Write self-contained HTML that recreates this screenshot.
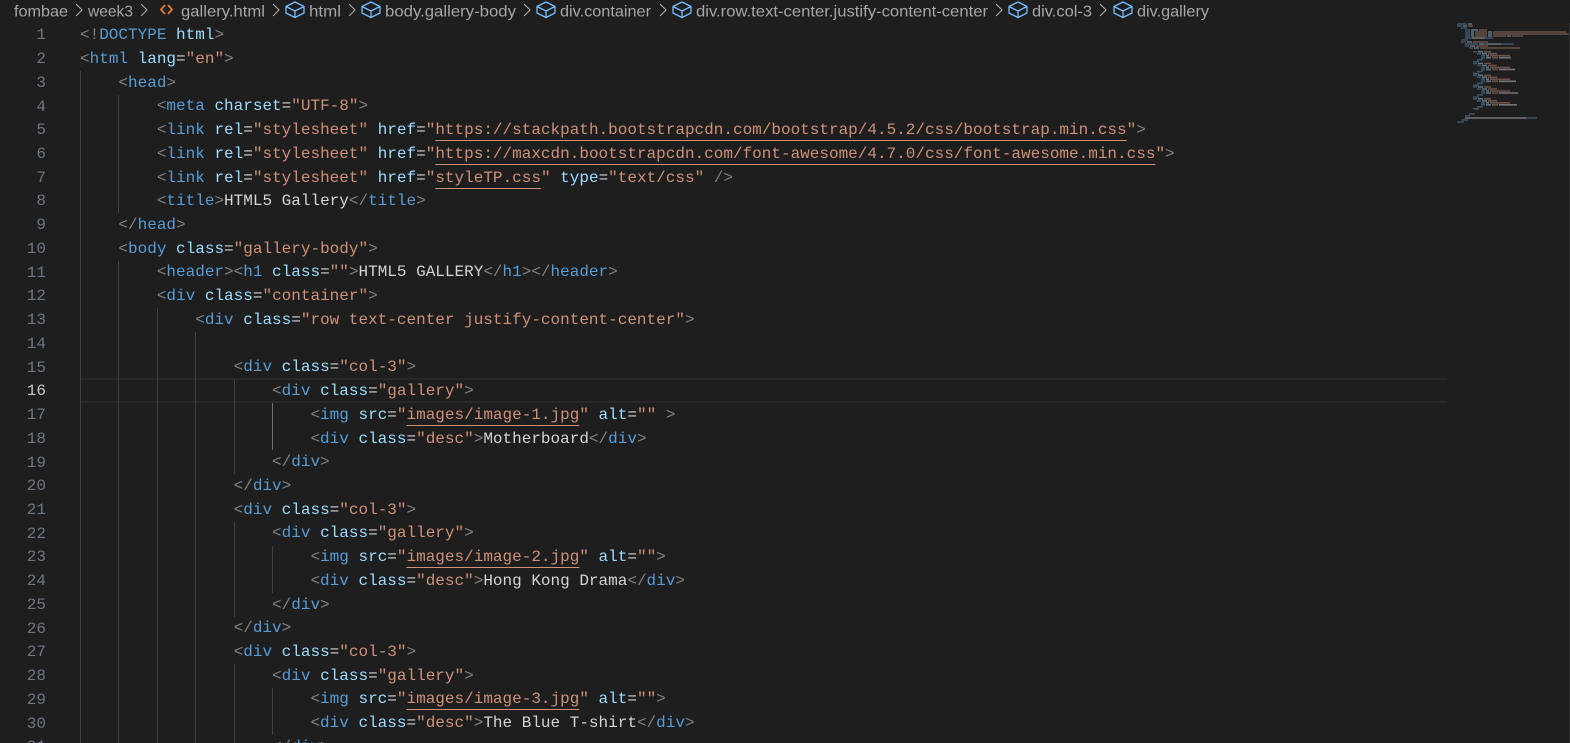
<!DOCTYPE html>
<html lang="en">
<head>
<meta charset="UTF-8">
<title>gallery.html</title>
<style>
html,body{margin:0;padding:0;background:#1e1e1e;width:1570px;height:743px;overflow:hidden;}
#root{position:absolute;left:0;top:0;width:1570px;height:743px;overflow:hidden;background:#1e1e1e;font-family:"Liberation Mono",monospace;}
#nums,#code{position:absolute;top:24.3px;height:718.7px;overflow:hidden;font-size:16px;line-height:23.73px;white-space:pre;}
#nums{left:0;width:46px;text-align:right;color:#6e7681;}
#nums b{font-weight:normal;color:#c6c6c6;}
#code{left:80px;width:1370px;color:#d4d4d4;}
#code div{height:23.73px;}
i{font-style:normal;}
.b{color:#808080;}.t{color:#569cd6;}.a{color:#9cdcfe;}.s{color:#ce9178;}
.u{color:#ce9178;text-decoration:underline;text-decoration-thickness:1px;text-underline-offset:6px;text-decoration-skip-ink:none;}
.g{position:absolute;width:1px;background:#404040;}
.al{position:absolute;left:80px;width:1367px;height:2px;background:#282828;}
svg{position:absolute;left:0;top:0;}
</style>
</head>
<body>
<div id="root">
<div class="al" style="top:378px"></div>
<div class="al" style="top:401px"></div>
<div class="g" style="left:80px;top:71px;height:672px"></div>
<div class="g" style="left:118px;top:95px;height:118px"></div>
<div class="g" style="left:118px;top:261px;height:482px"></div>
<div class="g" style="left:157px;top:308px;height:435px"></div>
<div class="g" style="left:195px;top:332px;height:411px"></div>
<div class="g" style="left:234px;top:379px;height:95px"></div>
<div class="g" style="left:234px;top:522px;height:95px"></div>
<div class="g" style="left:234px;top:664px;height:79px"></div>
<div class="g" style="left:272px;top:403px;height:47px;background:#707070"></div>
<div class="g" style="left:272px;top:546px;height:47px"></div>
<div class="g" style="left:272px;top:688px;height:47px"></div>

<div id="nums">1
2
3
4
5
6
7
8
9
10
11
12
13
14
15
<b>16</b>
17
18
19
20
21
22
23
24
25
26
27
28
29
30
31</div>

<div id="code"><div><i class="b">&lt;!</i><i class="t">DOCTYPE</i> <i class="a">html</i><i class="b">&gt;</i></div><div><i class="b">&lt;</i><i class="t">html</i> <i class="a">lang</i>=<i class="s">"en"</i><i class="b">&gt;</i></div><div>    <i class="b">&lt;</i><i class="t">head</i><i class="b">&gt;</i></div><div>        <i class="b">&lt;</i><i class="t">meta</i> <i class="a">charset</i>=<i class="s">"UTF-8"</i><i class="b">&gt;</i></div><div>        <i class="b">&lt;</i><i class="t">link</i> <i class="a">rel</i>=<i class="s">"stylesheet"</i> <i class="a">href</i>=<i class="s">"</i><i class="u">https://stackpath.bootstrapcdn.com/bootstrap/4.5.2/css/bootstrap.min.css</i><i class="s">"</i><i class="b">&gt;</i></div><div>        <i class="b">&lt;</i><i class="t">link</i> <i class="a">rel</i>=<i class="s">"stylesheet"</i> <i class="a">href</i>=<i class="s">"</i><i class="u">https://maxcdn.bootstrapcdn.com/font-awesome/4.7.0/css/font-awesome.min.css</i><i class="s">"</i><i class="b">&gt;</i></div><div>        <i class="b">&lt;</i><i class="t">link</i> <i class="a">rel</i>=<i class="s">"stylesheet"</i> <i class="a">href</i>=<i class="s">"</i><i class="u">styleTP.css</i><i class="s">"</i> <i class="a">type</i>=<i class="s">"text/css"</i> <i class="b">/&gt;</i></div><div>        <i class="b">&lt;</i><i class="t">title</i><i class="b">&gt;</i>HTML5 Gallery<i class="b">&lt;/</i><i class="t">title</i><i class="b">&gt;</i></div><div>    <i class="b">&lt;/</i><i class="t">head</i><i class="b">&gt;</i></div><div>    <i class="b">&lt;</i><i class="t">body</i> <i class="a">class</i>=<i class="s">"gallery-body"</i><i class="b">&gt;</i></div><div>        <i class="b">&lt;</i><i class="t">header</i><i class="b">&gt;&lt;</i><i class="t">h1</i> <i class="a">class</i>=<i class="s">""</i><i class="b">&gt;</i>HTML5 GALLERY<i class="b">&lt;/</i><i class="t">h1</i><i class="b">&gt;&lt;/</i><i class="t">header</i><i class="b">&gt;</i></div><div>        <i class="b">&lt;</i><i class="t">div</i> <i class="a">class</i>=<i class="s">"container"</i><i class="b">&gt;</i></div><div>            <i class="b">&lt;</i><i class="t">div</i> <i class="a">class</i>=<i class="s">"row text-center justify-content-center"</i><i class="b">&gt;</i></div><div> </div><div>                <i class="b">&lt;</i><i class="t">div</i> <i class="a">class</i>=<i class="s">"col-3"</i><i class="b">&gt;</i></div><div>                    <i class="b">&lt;</i><i class="t">div</i> <i class="a">class</i>=<i class="s">"gallery"</i><i class="b">&gt;</i></div><div>                        <i class="b">&lt;</i><i class="t">img</i> <i class="a">src</i>=<i class="s">"</i><i class="u">images/image-1.jpg</i><i class="s">"</i> <i class="a">alt</i>=<i class="s">""</i> <i class="b">&gt;</i></div><div>                        <i class="b">&lt;</i><i class="t">div</i> <i class="a">class</i>=<i class="s">"desc"</i><i class="b">&gt;</i>Motherboard<i class="b">&lt;/</i><i class="t">div</i><i class="b">&gt;</i></div><div>                    <i class="b">&lt;/</i><i class="t">div</i><i class="b">&gt;</i></div><div>                <i class="b">&lt;/</i><i class="t">div</i><i class="b">&gt;</i></div><div>                <i class="b">&lt;</i><i class="t">div</i> <i class="a">class</i>=<i class="s">"col-3"</i><i class="b">&gt;</i></div><div>                    <i class="b">&lt;</i><i class="t">div</i> <i class="a">class</i>=<i class="s">"gallery"</i><i class="b">&gt;</i></div><div>                        <i class="b">&lt;</i><i class="t">img</i> <i class="a">src</i>=<i class="s">"</i><i class="u">images/image-2.jpg</i><i class="s">"</i> <i class="a">alt</i>=<i class="s">""</i><i class="b">&gt;</i></div><div>                        <i class="b">&lt;</i><i class="t">div</i> <i class="a">class</i>=<i class="s">"desc"</i><i class="b">&gt;</i>Hong Kong Drama<i class="b">&lt;/</i><i class="t">div</i><i class="b">&gt;</i></div><div>                    <i class="b">&lt;/</i><i class="t">div</i><i class="b">&gt;</i></div><div>                <i class="b">&lt;/</i><i class="t">div</i><i class="b">&gt;</i></div><div>                <i class="b">&lt;</i><i class="t">div</i> <i class="a">class</i>=<i class="s">"col-3"</i><i class="b">&gt;</i></div><div>                    <i class="b">&lt;</i><i class="t">div</i> <i class="a">class</i>=<i class="s">"gallery"</i><i class="b">&gt;</i></div><div>                        <i class="b">&lt;</i><i class="t">img</i> <i class="a">src</i>=<i class="s">"</i><i class="u">images/image-3.jpg</i><i class="s">"</i> <i class="a">alt</i>=<i class="s">""</i><i class="b">&gt;</i></div><div>                        <i class="b">&lt;</i><i class="t">div</i> <i class="a">class</i>=<i class="s">"desc"</i><i class="b">&gt;</i>The Blue T-shirt<i class="b">&lt;/</i><i class="t">div</i><i class="b">&gt;</i></div><div>                    <i class="b">&lt;/</i><i class="t">div</i><i class="b">&gt;</i></div></div>

<svg width="1570" height="743" viewBox="0 0 1570 743" xmlns="http://www.w3.org/2000/svg">
  <g font-family="'Liberation Sans',sans-serif" font-size="16" fill="#a6a6a6">
    <text x="14" y="16.500" textLength="54" lengthAdjust="spacingAndGlyphs">fombae</text>
    <text x="88" y="16.500" textLength="45" lengthAdjust="spacingAndGlyphs">week3</text>
    <text x="181" y="16.500" textLength="84" lengthAdjust="spacingAndGlyphs">gallery.html</text>
    <text x="309" y="16.500" textLength="32" lengthAdjust="spacingAndGlyphs">html</text>
    <text x="385" y="16.500" textLength="131" lengthAdjust="spacingAndGlyphs">body.gallery-body</text>
    <text x="560" y="16.500" textLength="91" lengthAdjust="spacingAndGlyphs">div.container</text>
    <text x="696" y="16.500" textLength="292" lengthAdjust="spacingAndGlyphs">div.row.text-center.justify-content-center</text>
    <text x="1032" y="16.500" textLength="60" lengthAdjust="spacingAndGlyphs">div.col-3</text>
    <text x="1137" y="16.500" textLength="72" lengthAdjust="spacingAndGlyphs">div.gallery</text>
  </g>
  <g fill="none" stroke="#a6a6a6" stroke-width="1.100">
    <path d="M76 4l6 6-6 6"/>
    <path d="M141 4l6 6-6 6"/>
    <path d="M273 4l6 6-6 6"/>
    <path d="M349 4l6 6-6 6"/>
    <path d="M524 4l6 6-6 6"/>
    <path d="M660 4l6 6-6 6"/>
    <path d="M996 4l6 6-6 6"/>
    <path d="M1100 4l6 6-6 6"/>
  </g>
  <path d="M165 5l-4 4.500 4 4.500M168 5l4 4.500-4 4.500" fill="none" stroke="#e37933" stroke-width="1.800"/>
  <g fill="none" stroke="#75beff" stroke-width="1.300" stroke-linejoin="round">
    <path d="M295 2l9 4.500v6.500l-9 4.500-9-4.500v-6.500zM286 6.500l9 4.500 9-4.500M295 11v6.500"/>
    <path d="M371 2l9 4.500v6.500l-9 4.500-9-4.500v-6.500zM362 6.500l9 4.500 9-4.500M371 11v6.500"/>
    <path d="M546 2l9 4.500v6.500l-9 4.500-9-4.500v-6.500zM537 6.500l9 4.500 9-4.500M546 11v6.500"/>
    <path d="M682 2l9 4.500v6.500l-9 4.500-9-4.500v-6.500zM673 6.500l9 4.500 9-4.500M682 11v6.500"/>
    <path d="M1018 2l9 4.500v6.500l-9 4.500-9-4.500v-6.500zM1009 6.500l9 4.500 9-4.500M1018 11v6.500"/>
    <path d="M1123 2l9 4.500v6.500l-9 4.500-9-4.500v-6.500zM1114 6.500l9 4.500 9-4.500M1123 11v6.500"/>
  </g>

  <!-- minimap -->
  <rect x="1569" y="23" width="1" height="720" fill="#2c2c2c"/>
  <g fill="none" stroke-width="1.600" opacity=".8" transform="translate(1457 0)">
    <path stroke="#44627d" d="M0 24h10M0 26h5M4 28h6M8 30h5M8 32h5M8 34h5M8 36h5M8 38h7M28 38h8M4 40h7M4 42h5M8 44h13M44 44h13M8 46h4M12 48h4M12 114h6M8 116h5M4 120h7M0 122h7M69 118h11"/>
    <path stroke="#6d8a9e" d="M11 24h4M6 26h4M14 30h7M14 32h3M31 32h4M14 34h3M31 34h4M14 36h3M31 36h4M50 36h4M10 42h5M22 44h5M13 46h5M17 48h5"/>
    <path stroke="#7d5f50" d="M11 26h5M22 30h8M18 32h12M36 32h73M18 34h12M36 34h76M18 36h12M36 36h13M55 36h11M16 42h15M27 44h3M19 46h12M23 48h40"/>
    <path stroke="#8a8a8a" d="M15 38h13M30 44h14M8 118h61"/>
  </g>
  <g fill="none" stroke-width="1.600" opacity=".8" transform="translate(1457 51.700)">
    <path stroke="#44627d" d="M16 0h4M20 2h4M24 4h4M24 6h4M20 8h6M16 10h6"/>
    <path stroke="#6d8a9e" d="M21 0h5M25 2h5M29 4h3M29 6h5"/>
    <path stroke="#7d5f50" d="M27 0h7M31 2h9M33 4h20M35 6h6"/>
    <path stroke="#8a8a8a" d="M42 6h12"/>
  </g>
  <g fill="none" stroke-width="1.600" opacity=".8" transform="translate(1457 63.500)">
    <path stroke="#44627d" d="M16 0h4M20 2h4M24 4h4M24 6h4M20 8h6M16 10h6"/>
    <path stroke="#6d8a9e" d="M21 0h5M25 2h5M29 4h3M29 6h5"/>
    <path stroke="#7d5f50" d="M27 0h7M31 2h9M33 4h20M35 6h6"/>
    <path stroke="#8a8a8a" d="M42 6h16"/>
  </g>
  <g fill="none" stroke-width="1.600" opacity=".8" transform="translate(1457 75.300)">
    <path stroke="#44627d" d="M16 0h4M20 2h4M24 4h4M24 6h4M20 8h6M16 10h6"/>
    <path stroke="#6d8a9e" d="M21 0h5M25 2h5M29 4h3M29 6h5"/>
    <path stroke="#7d5f50" d="M27 0h7M31 2h9M33 4h20M35 6h6"/>
    <path stroke="#8a8a8a" d="M42 6h17"/>
  </g>
  <g fill="none" stroke-width="1.600" opacity=".8" transform="translate(1457 87)">
    <path stroke="#44627d" d="M16 0h4M20 2h4M24 4h4M24 6h4M20 8h6M16 10h6"/>
    <path stroke="#6d8a9e" d="M21 0h5M25 2h5M29 4h3M29 6h5"/>
    <path stroke="#7d5f50" d="M27 0h7M31 2h9M33 4h20M35 6h6"/>
    <path stroke="#8a8a8a" d="M42 6h19"/>
  </g>
  <g fill="none" stroke-width="1.600" opacity=".8" transform="translate(1457 98.800)">
    <path stroke="#44627d" d="M16 0h4M20 2h4M24 4h4M24 6h4M20 8h6M16 10h6"/>
    <path stroke="#6d8a9e" d="M21 0h5M25 2h5M29 4h3M29 6h5"/>
    <path stroke="#7d5f50" d="M27 0h7M31 2h9M33 4h20M35 6h6"/>
    <path stroke="#8a8a8a" d="M42 6h18"/>
  </g>
</svg>
</div>
</body>
</html>
